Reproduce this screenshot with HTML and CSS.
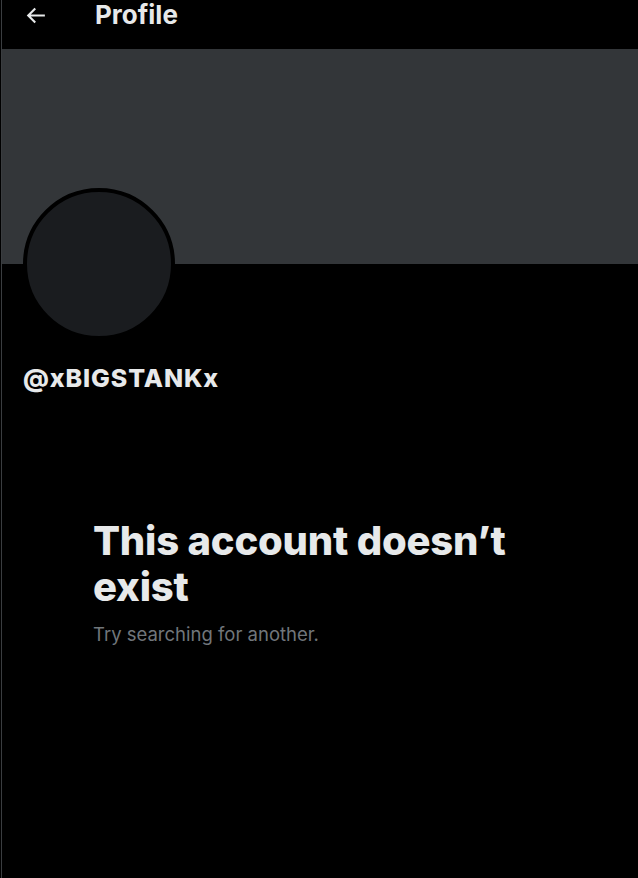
FILE: index.html
```html
<!DOCTYPE html>
<html lang="en">
<head>
  <meta charset="UTF-8">
  <meta name="viewport" content="width=device-width, initial-scale=1.0">
  <title>Profile</title>
  <link rel="stylesheet" href="styles.css">
</head>
<body>
  <div class="column">
    <header class="topbar">
      <button class="back" aria-label="Back">
        <svg viewBox="0 0 24 24"><path d="M7.414 13l5.043 5.04-1.414 1.42L3.586 12l7.457-7.46 1.414 1.42L7.414 11H21v2H7.414z"/></svg>
      </button>
      <h2 class="title">Profile</h2>
    </header>

    <div class="banner"></div>

    <div class="info">
      <div class="avatar"></div>
      <div class="handle">@xBIGSTANKx</div>
    </div>

    <div class="empty">
      <h1>This account doesn’t exist</h1>
      <p>Try searching for another.</p>
    </div>
  </div>
</body>
</html>
```

FILE: styles.css
```css
html, body {
  margin: 0;
  background: #000;
  height: 100%;
}
body {
  font-family: Inter, "Noto Sans", Arial, sans-serif;
  color: #e7e9ea;
  overflow: hidden;
}
.column {
  margin-left: 1px;
  border-left: 1px solid #3a3d40;
  min-height: 100%;
}
.topbar {
  height: 49px;
  display: flex;
  align-items: flex-start;
}
.back {
  background: none;
  border: none;
  padding: 0;
  margin: 3px 0 0 21px;
  width: 25px;
  height: 25px;
  cursor: pointer;
}
.back svg {
  display: block;
  fill: #e7e9ea;
  width: 25px;
  height: 25px;
}
.title {
  margin: 0 0 0 47px;
  font-size: 26px;
  font-weight: 700;
  line-height: 30px;
}
.banner {
  height: 215px;
  background: #333639;
}
.info {
  padding: 0 21px;
}
.avatar {
  width: 152px;
  height: 152px;
  box-sizing: border-box;
  margin-top: -76px;
  border: 4px solid #000;
  border-radius: 50%;
  background: #1a1c1f;
}
.handle {
  margin-top: 23px;
  font-size: 25px;
  font-weight: 800;
  letter-spacing: 0.9px;
}
.empty {
  padding: 0 91px;
  margin-top: 125px;
}
.empty h1 {
  margin: 0;
  font-size: 40px;
  font-weight: 800;
  line-height: 46px;
  letter-spacing: -0.2px;
}
.empty p {
  margin: 12px 0 0;
  font-size: 18.5px;
  line-height: 24px;
  color: #71767b;
}
```
